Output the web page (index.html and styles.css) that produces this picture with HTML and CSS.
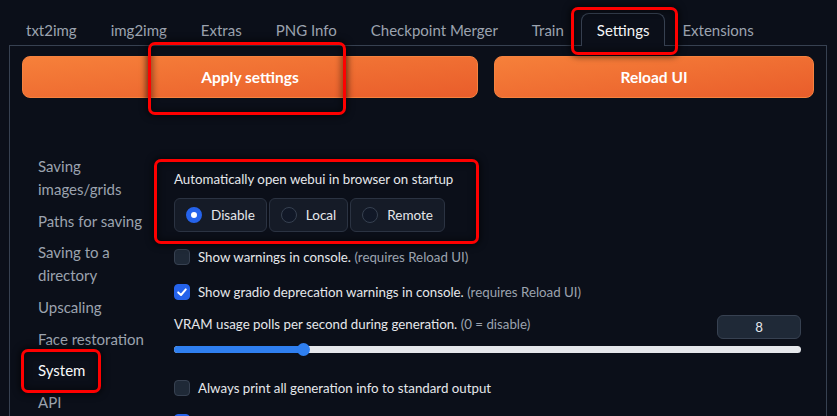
FILE: index.html
```html
<!DOCTYPE html>
<html>
<head>
<meta charset="utf-8">
<link rel="stylesheet" href="styles.css">
</head>
<body>
<div class="app">
  <div class="tabs">
    <div class="tab">txt2img</div>
    <div class="tab">img2img</div>
    <div class="tab">Extras</div>
    <div class="tab">PNG Info</div>
    <div class="tab">Checkpoint Merger</div>
    <div class="tab">Train</div>
    <div class="tab selected">Settings</div>
    <div class="tab">Extensions</div>
  </div>
  <div class="panel">
    <div class="buttons">
      <button class="btn apply">Apply settings</button>
      <button class="btn reload">Reload UI</button>
    </div>
    <div class="settings">
      <nav class="nav">
        <div class="nav-item">Saving images/grids</div>
        <div class="nav-item">Paths for saving</div>
        <div class="nav-item">Saving to a directory</div>
        <div class="nav-item">Upscaling</div>
        <div class="nav-item">Face restoration</div>
        <div class="nav-item active">System</div>
        <div class="nav-item">API</div>
      </nav>
      <div class="content">
        <div class="radio-block">
          <div class="label">Automatically open webui in browser on startup</div>
          <div class="radios">
            <div class="radio checked"><span class="dot"></span>Disable</div>
            <div class="radio"><span class="dot"></span>Local</div>
            <div class="radio"><span class="dot"></span>Remote</div>
          </div>
        </div>
        <div class="check first"><span class="box"></span><span>Show warnings in console. <span class="muted">(requires Reload UI)</span></span></div>
        <div class="check"><span class="box on"><svg viewBox="0 0 16 16" width="16" height="16"><polyline points="4.2,8.4 7,11 11.8,5.4" fill="none" stroke="#fff" stroke-width="2" stroke-linecap="round" stroke-linejoin="round"/></svg></span><span>Show gradio deprecation warnings in console. <span class="muted">(requires Reload UI)</span></span></div>
        <div class="vram">
          <span class="vram-label">VRAM usage polls per second during generation. <span class="muted">(0 = disable)</span></span>
          <div class="num">8</div>
        </div>
        <div class="slider">
          <div class="fill" style="width:20.5%"></div>
          <div class="thumb" style="left:20.5%"></div>
        </div>
        <div class="check third"><span class="box"></span><span>Always print all generation info to standard output</span></div>
        <div class="check fourth"><span class="box on"></span></div>
      </div>
    </div>
  </div>
  <div class="mark mark-tab"></div>
  <div class="mark mark-apply"></div>
  <div class="mark mark-radio"></div>
  <div class="mark mark-system"></div>
</div>
</body>
</html>
```

FILE: styles.css
```css
* { box-sizing: border-box; }
html, body { margin: 0; padding: 0; }
body {
  background: #0b0f19;
  font-family: "Source Sans Pro", Lato, "Noto Sans", sans-serif;
  color: #e5e7eb;
  width: 837px;
  height: 416px;
  overflow: hidden;
}
.app { position: relative; width: 837px; height: 416px; overflow: hidden; }

.tabs {
  display: flex;
  align-items: flex-end;
  height: 45px;
  padding-left: 9px;
  padding-top: 13px;
}
.tab {
  font-size: 15px;
  color: #9ca3af;
  padding: 0 16px;
  height: 32px;
  line-height: 32px;
  border: 1px solid transparent;
  border-bottom: none;
  white-space: nowrap;
}
.tab.selected {
  color: #f3f4f6;
  border-color: #374151;
  border-radius: 8px 8px 0 0;
  background: #0b0f19;
  position: relative;
  z-index: 2;
  margin-bottom: -1px;
  height: 33px;
  padding: 0 15px;
}

.panel {
  margin-left: 9px;
  width: 818px;
  height: 380px;
  border: 1px solid #374151;
  border-bottom: none;
  padding: 10px 12px 0 12px;
}
.buttons { display: flex; gap: 16px; }
.btn {
  height: 42px;
  border: 1px solid #f5823f;
  border-radius: 8px;
  background: linear-gradient(to bottom right, #f6803a, #e95d2b);
  color: #fff;
  font-family: inherit;
  font-weight: 700;
  font-size: 15.5px;
}
.apply { flex: 0 0 456px; }
.reload { flex: 0 0 320px; }

.settings { display: flex; margin-top: 57px; }
.nav { width: 136px; padding-left: 16px; flex: none; }
.nav-item {
  font-size: 15px;
  line-height: 23px;
  color: #9ca3af;
  margin-bottom: 8.7px;
  width: 116px;
}
.nav-item.active { color: #f9fafb; }

.content { flex: 1; padding: 0 13px 0 16px; font-size: 13.3px; }
.label { line-height: 20px; margin-top: 14px; }
.radios { display: flex; gap: 2px; margin-top: 9px; }
.radio {
  display: flex;
  align-items: center;
  height: 34px;
  padding: 0 11px;
  border: 1px solid #2b3342;
  background: #151b27;
  border-radius: 6px;
  gap: 9px;
  font-size: 13.5px;
}
.dot {
  width: 16px; height: 16px;
  border-radius: 50%;
  border: 1px solid #374151;
  background: #111827;
}
.radio.checked .dot {
  background: #fff;
  border: 5px solid #2563eb;
}

.check {
  display: flex;
  align-items: center;
  height: 24px;
  gap: 8px;
  margin-top: 11px;
}
.check.first { margin-top: 13px; }
.check.third { margin-top: 23px; }
.check.fourth { margin-top: 10px; }
.box {
  width: 16px; height: 16px;
  flex: none;
  border-radius: 4px;
  border: 1px solid #374151;
  background: #1f2937;
}
.box.on { background: #2563eb; border-color: #2563eb; }
.box svg { display: block; margin: -1px; }
.muted { color: #9ca3af; }

.vram {
  display: flex;
  justify-content: space-between;
  align-items: flex-start;
  margin-top: 11px;
  height: 24px;
}
.vram-label { line-height: 18px; }
.num {
  width: 84px;
  height: 24px;
  border: 1px solid #374151;
  background: #1f2937;
  border-radius: 6px;
  text-align: center;
  line-height: 22px;
}
.slider {
  position: relative;
  height: 7px;
  margin-top: 7px;
  border-radius: 4px;
  background: #e5e7eb;
}
.fill {
  height: 7px;
  border-radius: 4px;
  background: #2f7ff0;
}
.thumb {
  position: absolute;
  top: -3px;
  width: 13px; height: 13px;
  margin-left: -6px;
  border-radius: 50%;
  background: #2f7ff0;
}

.mark {
  position: absolute;
  border: 3px solid #ff0000;
  border-radius: 7px;
  box-shadow: 0 0 6px 2px rgba(0,0,0,0.55), inset 0 0 6px 2px rgba(0,0,0,0.4);
  z-index: 5;
}
.mark-tab { left: 571px; top: 7px; width: 107px; height: 48px; }
.mark-apply { left: 148px; top: 42px; width: 198px; height: 73px; }
.mark-radio { left: 154px; top: 159px; width: 325px; height: 85px; }
.mark-system { left: 21px; top: 349px; width: 80px; height: 44px; }
```
